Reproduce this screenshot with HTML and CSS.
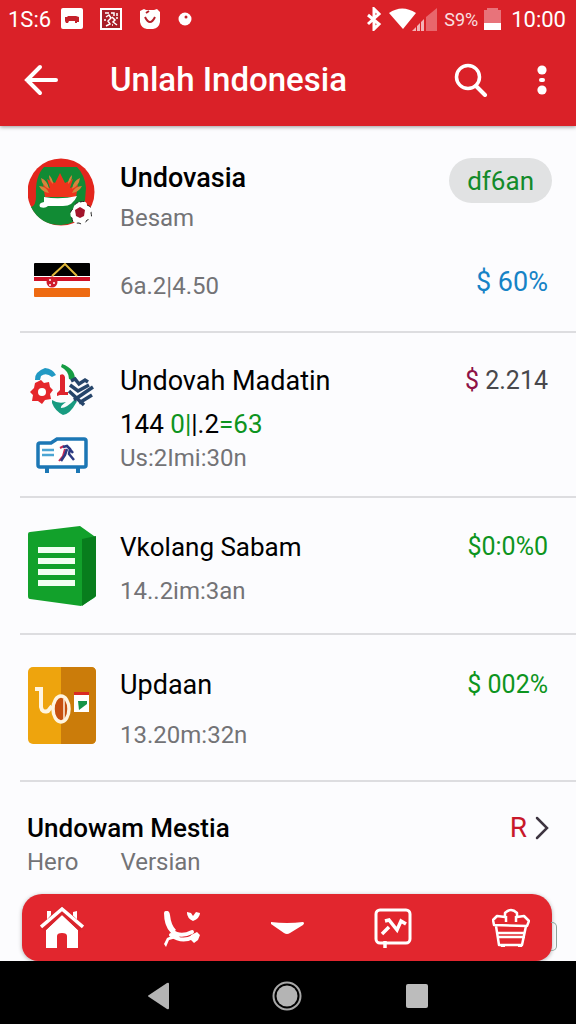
FILE: index.html
```html
<!DOCTYPE html>
<html lang="id">
<head>
    <meta charset="UTF-8">
    <meta name="viewport" content="width=device-width, initial-scale=1.0">
    <title>Unlah Indonesia</title>
    <link rel="stylesheet" href="styles.css">
</head>
<body>

    <header class="header">
        <div class="status-bar">
            <div class="status-left">
                <span>1S:6</span>
                <svg width="22" height="22" viewBox="0 0 22 22"><rect width="22" height="21" rx="2" fill="#fff"/><path d="M4 9h2l1-1h8l3 1v5h-2v1h-2v-2H8l-1 2H5l-1-2z" fill="#c4212a"/></svg>
                <svg width="22" height="22" viewBox="0 0 22 22"><rect x="1" y="1" width="20" height="20" fill="#a81f28" stroke="#fff" stroke-width="2"/><path d="M5 5h4M11 5h3v3M17 5v3M6 9l3-2 2 3-3 3 2 3-4 2M12 9l3 3-2 2 4 3M4 12h2M16 10h2M12 17h1" fill="none" stroke="#fff" stroke-width="1.5"/></svg>
                <svg width="22" height="22" viewBox="0 0 22 22"><path d="M1 3l4-2 2 1h8l3-1 3 3v10q-1 6-7 7H8q-6-1-7-7z" fill="#fff"/><path d="M6 9q5 10 10 0M7 5l3-2" fill="none" stroke="#b3202a" stroke-width="2"/></svg>
                <svg width="14" height="22" viewBox="0 0 14 22"><circle cx="7" cy="11" r="6.5" fill="#fff"/><circle cx="8" cy="9" r="1.5" fill="#c4212a"/></svg>
            </div>
            <div class="status-right">
                <svg width="16" height="24" viewBox="0 0 16 24"><path d="M2 8l11 9-5 5V2l5 5-11 10" fill="none" stroke="#fff" stroke-width="3"/></svg>
                <svg width="50" height="24" viewBox="0 0 50 24"><path d="M1 6q13-9 27 0L15 22z" fill="#fff"/><path d="M24 24l4-4v4zM29 24v-5l3-3v8zM33 24v-9l3-3v12z" fill="#f3b3b6"/><path d="M38 24V10l11-9v23z" fill="#e8666c"/></svg>
                <span class="battery-text">S9%</span>
                <svg width="17" height="24" viewBox="0 0 17 24"><path d="M0 3h3V1h11v2h3v20H0z" fill="#e8737a"/><rect y="16" width="17" height="7" fill="#fff"/></svg>
                <span class="clock">10:00</span>
            </div>
        </div>
        <div class="app-bar">
            <button class="icon-btn" aria-label="Back">
                <svg width="34" height="32" viewBox="0 0 34 32"><path d="M16 3L3 16l13 13M3 16h29" fill="none" stroke="#fff" stroke-width="4" stroke-linecap="round"/></svg>
            </button>
            <h1>Unlah Indonesia</h1>
            <button class="icon-btn" aria-label="Search">
                <svg width="34" height="34" viewBox="0 0 34 34"><circle cx="14" cy="14" r="11.5" fill="none" stroke="#fff" stroke-width="3.5"/><path d="M22 23l9 9" stroke="#fff" stroke-width="4" stroke-linecap="round"/></svg>
            </button>
            <button class="icon-btn" aria-label="More">
                <svg width="12" height="32" viewBox="0 0 12 32"><circle cx="6" cy="6" r="4.6" fill="#fff"/><rect x="3" y="14" width="6" height="4" rx="2" fill="#fff"/><circle cx="6" cy="26" r="4.6" fill="#fff"/></svg>
            </button>
        </div>
    </header>

    <main class="list">
        <section class="item item-top">
            <div class="icons">
                <svg width="68" height="70" viewBox="0 0 68 70">
                    <circle cx="33" cy="34" r="33.5" fill="#e3261d"/>
                    <path d="M16 9h33q8 8 9 21l-2 24q-9 13-23 13Q12 67 3 49q5-1 5-11-1-20 8-29z" fill="#118b34"/>
                    <path d="M17 39l-2-12 7 3-3-9 8 4 5-10 5 10 8-4-3 9 8-3-2 12z" fill="#ee331c"/>
                    <path d="M11 28q7 0 10 7-7-1-10-7zM13 20q7 3 8 11-7-3-8-11zM21 17q4 4 4 9-4-3-4-9zM54 28q-7 0-10 7 7-1 10-7zM52 20q-7 3-8 11 7-3 8-11zM44 17q-4 4-4 9 4-3 4-9z" fill="#d8823c"/>
                    <path d="M16 39q16 3 33-1-4 10-14 10H20q-3 3-8 1-2-4 4-5z" fill="#fff"/>
                    <path d="M52 44q7-2 7 3 6 2 4 8 2 6-4 7-3 6-8 3-7 1-7-5-4-5 1-9 1-6 7-7z" fill="#fff" stroke="#222" stroke-dasharray="4 5"/>
                    <path d="M47 52l5-3 5 3-1 6-4 2-4-2z" fill="#a3152c"/>
                </svg>
                <svg width="56" height="35" viewBox="0 0 56 35">
                    <rect width="56" height="14" rx="1" fill="#000"/>
                    <rect y="13" width="56" height="13" fill="#fff"/>
                    <rect y="14" width="56" height="4" fill="#cf1126"/>
                    <rect y="25" width="56" height="9" rx="1" fill="#ee6a12"/>
                    <path d="M18 13L31 1l12 12" fill="none" stroke="#e0b73a" stroke-width="2"/>
                    <circle cx="18" cy="19" r="5.5" fill="#cf1b2c"/><circle cx="16" cy="17" r="1" fill="#fff"/><circle cx="20" cy="20" r="1" fill="#fff"/><circle cx="16" cy="22" r="1" fill="#fff"/>
                </svg>
            </div>
            <div class="text">
                <h2 class="strong">Undovasia</h2>
                <p class="sub">Besam</p>
                <p class="sub extra">6a.2|4.50</p>
            </div>
            <div class="side">
                <button class="pill">df6an</button>
                <span class="amount blue">$ 60%</span>
            </div>
        </section>

        <section class="item item-tickets">
            <div class="icons">
                <svg width="64" height="54" viewBox="0 0 64 54">
                    <path d="M5 17q-1-8 10-12 8 1 11 7l-4 2q-6-5-11-1l-1 4z" fill="#2199c4"/>
                    <path d="M32 1q14 5 13 17l-6-2Q39 8 31 4z" fill="#159c43"/>
                    <path d="M11 17l3 3 5-1 1 5 3 3-3 4 1 5-6 1-3 4-4-3-6 0 1-6-3-3 4-4 1-5z" fill="#e5262b"/>
                    <circle cx="12" cy="29" r="4" fill="#fff"/>
                    <path d="M30 12q4-2 5 2v15h3v3h-8l-3 1v-3l3-3z" fill="#de242e"/>
                    <path d="M22 37q6 4 14 2-6 4-5 6 6 0 14-9 3 2 1 4-6 11-13 12-8-4-11-12z" fill="#189b80"/>
                    <path d="M41 18l4-2 4 5 6-4 3 2M40 22l8 6 11-6M39 28l15 14M63 24L44 37M62 32l-13 8" fill="none" stroke="#26456a" stroke-width="3.5"/>
                </svg>
                <svg width="52" height="36" viewBox="0 0 52 36">
                    <path d="M4 6h11l6-4h27q2 0 2 2v24q0 2-2 2H4q-2 0-2-2V8q0-2 2-2z" fill="#fff" stroke="#1c77b5" stroke-width="3.5"/>
                    <path d="M6 13h12M6 18h12" stroke="#4ba5d3" stroke-width="2.5"/>
                    <path d="M11 30v6M42 30v6" stroke="#1c77b5" stroke-width="4"/>
                    <path d="M24 11l4-2M29 12l-2 7-4 5" fill="none" stroke="#c92b55" stroke-width="2"/>
                    <path d="M27 10l4-1 3 3-1 5 5 6M31 12l-2 6-4 6M33 11l4 5" fill="none" stroke="#2b3a82" stroke-width="2.5"/>
                </svg>
            </div>
            <div class="text">
                <h2>Undovah Madatin</h2>
                <p class="line">144 <span class="green">0|</span>|.2<span class="green">=63</span></p>
                <p class="sub">Us:2Imi:30n</p>
            </div>
            <div class="side">
                <span class="amount grey"><span class="plum">$</span> 2.214</span>
            </div>
        </section>

        <section class="item item-book">
            <div class="icons">
                <svg width="70" height="82" viewBox="0 0 70 82">
                    <path d="M3 7L53 1l14 10q2 1 2 3v56q0 2-2 3L54 81 3 74q-2 0-2-3V9q0-2 2-2z" fill="#12a12b"/>
                    <path d="M55 14l14-3v60L55 81z" fill="#087d1d"/>
                    <path d="M11 25h37M11 36h37M11 47h37M11 58h37" stroke="#f2fff2" stroke-width="6"/>
                </svg>
            </div>
            <div class="text">
                <h2 class="small">Vkolang Sabam</h2>
                <p class="sub">14..2im:3an</p>
            </div>
            <div class="side">
                <span class="amount green">$0:0%0</span>
            </div>
        </section>

        <section class="item item-update">
            <div class="icons">
                <svg width="68" height="77" viewBox="0 0 68 77">
                    <rect x="0" y="0" width="68" height="77" rx="5" fill="#eea40d"/>
                    <path d="M33 0h30q5 0 5 5v67q0 5-5 5H33z" fill="#cb7c0a"/>
                    <path d="M7 22h6v18q1 6 7 4l4-5" fill="none" stroke="#fff5e0" stroke-width="4"/>
                    <ellipse cx="33" cy="42" rx="8" ry="13" fill="#c6500e" stroke="#fff5e0" stroke-width="3.5"/>
                    <path d="M36 32v20" stroke="#fff5e0" stroke-width="1.5"/>
                    <rect x="46" y="26" width="15" height="19" fill="#fff"/>
                    <rect x="46" y="25" width="15" height="3" fill="#da2a23"/>
                    <path d="M50 34h9v3l-8 6z" fill="#169447"/>
                </svg>
            </div>
            <div class="text">
                <h2>Updaan</h2>
                <p class="sub">13.20m:32n</p>
            </div>
            <div class="side">
                <span class="amount green">$ 002%</span>
            </div>
        </section>

        <section class="about">
            <div>
                <h2 class="strong small">Undowam Mestia</h2>
                <p class="sub about-sub"><span>Hero</span><span>Versian</span></p>
            </div>
            <a href="#" class="more">R
                <svg width="14" height="24" viewBox="0 0 14 24"><path d="M2 2l10 10L2 22" fill="none" stroke="#3d3440" stroke-width="2.5" stroke-linecap="round"/></svg>
            </a>
        </section>
    </main>

    <nav class="tab-bar">
        <button class="tab" aria-label="Home">
            <svg width="44" height="44" viewBox="0 0 44 44"><path d="M7 13V5h4v4l-4 5M37 14V5l-4 1v4zM6 24l16-15 16 15v18H27V30q0-3-5-3t-5 3v12H6z" fill="#fff"/><path d="M2 23L22 4l20 19" fill="none" stroke="#d9242c" stroke-width="7"/><path d="M1 21L22 3l21 18" fill="none" stroke="#fff" stroke-width="3.5"/></svg>
        </button>
        <button class="tab" aria-label="Activity">
            <svg width="40" height="40" viewBox="0 0 40 40"><path d="M5 5q0 12 6 18 8 7 20 1M10 27q11 8 22 2" fill="none" stroke="#fff" stroke-width="4" stroke-linecap="round"/><path d="M4 4q4-3 5 3 1 10 6 15l-4 3Q3 18 4 4zM3 36l3-6 9-4 4 3-11 3-3 7zM29 31l1-4 6-3 3 3-2 5-4 3zM26 4l4 1 2 3 3-4 4 1q0 5-7 8-6-3-6-8z" fill="#fff"/></svg>
        </button>
        <button class="tab" aria-label="Expand">
            <svg width="36" height="16" viewBox="0 0 36 16"><path d="M2 2q16 2 32 0 2 1 0 3L21 13q-3 2-6 0L2 4z" fill="#fff"/></svg>
        </button>
        <button class="tab" aria-label="Statistics">
            <svg width="38" height="40" viewBox="0 0 38 40"><rect x="2" y="2" width="34" height="33" rx="4" fill="none" stroke="#fff" stroke-width="3"/><path d="M11 33v7" stroke="#fff" stroke-width="3.5"/><path d="M8 26l7-7M11 13l4-1 8 10 4-9 5 3" fill="none" stroke="#fff" stroke-width="3.5"/></svg>
        </button>
        <button class="tab" aria-label="Basket">
            <svg width="38" height="40" viewBox="0 0 38 40"><path d="M2 17l-1-5 4-4 8 1v-4q6-6 12 0v4l7-1 5 5-2 5zM4 18l3 19h23l4-19M5 25h28M6 29h27M14 8v6M24 8v6" fill="none" stroke="#fff" stroke-width="2.5" stroke-linejoin="round"/><path d="M8 36h5v3H9zM26 36h5l-1 3h-4z" fill="#fff"/></svg>
        </button>
    </nav>

    <footer class="system-bar">
        <button class="icon-btn" aria-label="System back"><svg width="22" height="28" viewBox="0 0 22 28"><path d="M2 13L20 1q2-1 2 1v24q0 2-2 1L2 15q-2-1 0-2z" fill="#b4b4b4"/></svg></button>
        <button class="icon-btn" aria-label="System home"><svg width="30" height="30" viewBox="0 0 30 30"><circle cx="15" cy="15" r="13.5" fill="none" stroke="#a8a8a8" stroke-width="2"/><circle cx="15" cy="15" r="10.5" fill="#b4b4b4"/></svg></button>
        <button class="icon-btn" aria-label="Recent apps"><svg width="24" height="24" viewBox="0 0 24 24"><rect x="1" width="22" height="24" rx="2" fill="#bcbcbc"/></svg></button>
    </footer>

</body>
</html>
```
FILE: styles.css
```css
* {
    box-sizing: border-box;
}
body {
    font-family: Roboto, "Liberation Sans", sans-serif;
    background: #fcfcfe;
    margin: 0;
    min-height: 100vh;
    display: flex;
    flex-direction: column;
    color: #000;
}
h1, h2, p {
    margin: 0;
}
svg {
    display: block;
    flex: none;
}
button {
    border: none;
    background: none;
    padding: 0;
    font-family: inherit;
    cursor: pointer;
}

/* Header */
.header {
    background: #da2128;
    color: #fff;
    box-shadow: 0 1px 4px rgba(0, 0, 0, 0.4);
}
.status-bar {
    display: flex;
    justify-content: space-between;
    align-items: center;
    height: 38px;
    padding: 0 10px 0 8px;
    font-size: 22px;
}
.status-left, .status-right {
    display: flex;
    align-items: center;
}
.status-left {
    gap: 17px;
}
.status-left span {
    margin-right: -7px;
}
.status-right {
    gap: 6px;
}
.battery-text {
    font-size: 18px;
    opacity: 0.85;
}
.clock {
    margin-left: 4px;
}
.app-bar {
    display: flex;
    align-items: center;
    height: 88px;
    padding: 0 28px 4px 24px;
}
.app-bar h1 {
    flex: 1;
    margin-left: 52px;
    font-size: 33px;
    line-height: 40px;
    font-weight: 500;
}
.app-bar .icon-btn:last-child {
    margin-left: 48px;
}

/* List */
.list {
    flex: 1;
    padding-left: 20px;
}
.item {
    display: flex;
    border-bottom: 2px solid #dddde0;
    padding: 32px 24px 23px 0;
}
.icons {
    display: flex;
    flex-direction: column;
    align-items: center;
    width: 84px;
    margin-right: 16px;
}
.text {
    flex: 1;
}
h2 {
    font-size: 27px;
    line-height: 32px;
    font-weight: 400;
}
.strong {
    font-weight: 500;
}
.small {
    font-size: 26px;
}
.line {
    font-size: 26px;
    line-height: 32px;
    margin-top: 11px;
}
.sub {
    font-size: 24px;
    line-height: 28px;
    color: #737376;
}
.side {
    display: flex;
    flex-direction: column;
    align-items: flex-end;
}
.amount {
    font-size: 25px;
    line-height: 32px;
    padding-right: 4px;
}
.pill {
    height: 45px;
    padding: 0 18px;
    border-radius: 24px;
    background: #e1e2e3;
    color: #138a2a;
    font-size: 26px;
}
.green {
    color: #0d9420;
}
.blue {
    color: #1683c6;
    font-size: 27px;
}
.grey {
    color: #48484c;
}
.plum {
    color: #8e1246;
}

.item-top {
    padding-bottom: 31px;
}
.item-top .icons {
    gap: 35px;
}
.item-top .text {
    padding-top: 4px;
}
.item-top .sub {
    margin-top: 10px;
}
.item-top .extra {
    margin-top: 40px;
}
.item-top .side {
    gap: 63px;
}
.item-tickets .icons {
    gap: 20px;
    margin-top: -2px;
}
.item-tickets .sub {
    margin-top: 4px;
}
.item-book {
    padding-top: 27px;
    padding-bottom: 26px;
}
.item-book .text, .item-book .side {
    padding-top: 6px;
}
.item-book .sub {
    margin-top: 14px;
}
.item-update {
    padding-bottom: 31px;
}
.item-update .text, .item-update .side {
    padding-top: 2px;
}
.item-update .sub {
    margin-top: 20px;
}

.about {
    display: flex;
    justify-content: space-between;
    align-items: flex-start;
    padding: 30px 27px 16px 7px;
}
.about-sub {
    display: flex;
    gap: 42px;
    margin-top: 4px;
}
.more {
    display: flex;
    align-items: center;
    gap: 8px;
    color: #c8182a;
    font-size: 28px;
    line-height: 32px;
    text-decoration: none;
}

/* Bottom bars */
.tab-bar {
    position: relative;
    display: grid;
    grid-template-columns: repeat(5, 1fr);
    align-items: center;
    height: 67px;
    margin: 0 24px 0 22px;
    border-radius: 20px 20px 16px 16px;
    background: #e2262e;
    box-shadow: 0 1px 4px rgba(0, 0, 0, 0.3);
}
/* edge of the drawer handle behind the bar */
.tab-bar::after {
    content: "";
    position: absolute;
    right: -5px;
    top: 28px;
    width: 5px;
    height: 27px;
    border: 1px solid #8fa39b;
    border-left: none;
    border-radius: 0 5px 5px 0;
}
.tab {
    display: flex;
    justify-content: center;
}
.tab:first-child {
    justify-content: flex-start;
    padding-left: 18px;
}
.tab:nth-child(5) {
    justify-content: flex-end;
    padding-right: 22px;
}
.system-bar {
    display: flex;
    justify-content: center;
    align-items: center;
    gap: 103px;
    height: 63px;
    padding-top: 6px;
    background: #000;
}
```
